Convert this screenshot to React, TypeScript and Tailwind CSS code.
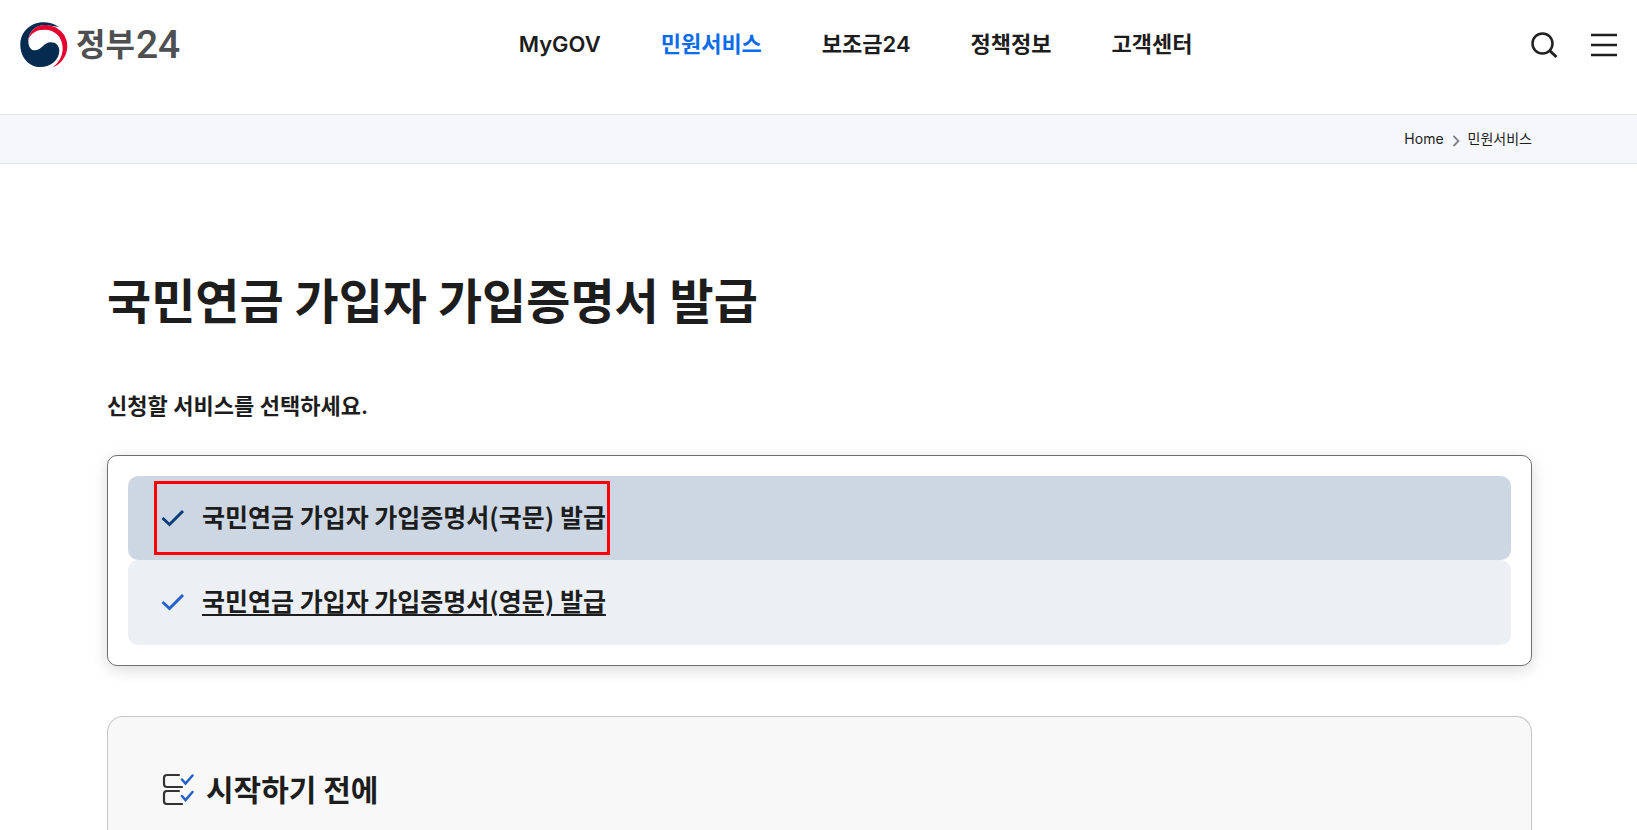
import { ReactNode } from "react";

const navItems = ["MyGOV", "민원서비스", "보조금24", "정책정보", "고객센터"];

type ServiceLinkProps = {
  selected?: boolean;
  children: ReactNode;
};

function Logo() {
  return (
    <a href="#" className="flex h-12 items-center gap-2" aria-label="정부24">
      <svg width="48" height="46" viewBox="59 65 144 138" aria-hidden="true">
        <path
          d="M176 80 C160 69 145 66 130 66 C88 66 60 97 60 133 C60 172 87 200 120 200 C152 200 177 178 177 151 C177 136 166 126 152 126 C130 126 124 150 103 150 C91 150 84 139 84 122 C84 95 106 75 132 75 C150 75 165 79 176 80 Z"
          fill="#052b51"
        />
        <path
          d="M85 115 C89 88 111 74 134 74 C173 74 201 103 201 137 C201 167 182 192 157 201 C176 187 187 167 187 144 C187 110 164 88 132 88 C109 88 93 98 85 115 Z"
          fill="#e4032e"
        />
      </svg>
      <span className="flex items-center gap-px leading-10 text-[#4d4f50]">
        <span className="pb-1.5 text-[32px] font-bold">정부</span>
        <span className="font-['Roboto',sans-serif] text-[39px] font-medium">24</span>
      </span>
    </a>
  );
}

function CheckIcon({ className }: { className: string }) {
  return (
    <svg width="24" height="18" viewBox="0 0 24 18" fill="none" className={className} aria-hidden="true">
      <path d="M1.500 9 L8.500 15.500 L22 2" stroke="currentColor" strokeWidth="3" />
    </svg>
  );
}

function Header() {
  return (
    <header className="flex h-[114px] items-start justify-between px-5 pt-[21px]">
      <Logo />
      <nav className="flex h-12 items-center gap-[60px] pb-0.5 font-['Inter','Noto_Sans_CJK_KR',sans-serif] text-[22px] font-semibold">
        {navItems.map((item) => (
          <a key={item} href="#" className={item === "민원서비스" ? "text-[#0a6cea]" : ""}>
            {item}
          </a>
        ))}
      </nav>
      <div className="flex h-12 items-center gap-8">
        <button type="button" aria-label="검색">
          <svg width="28" height="28" viewBox="0 0 28 28" fill="none" stroke="#222" strokeWidth="2.500">
            <circle cx="11.500" cy="12.500" r="10" />
            <path d="M18.500 19.500 L25.500 26" strokeWidth="3" />
          </svg>
        </button>
        <button type="button" aria-label="전체메뉴">
          <svg width="26" height="24" viewBox="0 0 26 24" fill="none" stroke="currentColor" strokeWidth="2.500">
            <path d="M0 2 H26 M0 12 H26 M0 22 H26" />
          </svg>
        </button>
      </div>
    </header>
  );
}

function Breadcrumb() {
  return (
    <div className="border-y border-[#e1e5ea] bg-[#f5f7fb]">
      <ol className="flex h-12 items-center justify-end gap-2 pr-[105px] font-['Inter','Noto_Sans_CJK_KR',sans-serif] text-sm">
        <li>
          <a href="#">Home</a>
        </li>
        <li className="pt-1" aria-hidden="true">
          <svg width="8" height="12" viewBox="0 0 8 12" fill="none" stroke="#808388" strokeWidth="1.800">
            <path d="M1.500 1 L6.500 6 L1.500 11" />
          </svg>
        </li>
        <li>
          <a href="#">민원서비스</a>
        </li>
      </ol>
    </div>
  );
}

function ServiceLink({ selected, children }: ServiceLinkProps) {
  return (
    <li className={`flex rounded-[10px] px-[26px] pt-[5px] ${selected ? "bg-[#cdd7e4] pb-[5px]" : "bg-[#ecf0f5] pb-1.5"}`}>
      <a
        href="#"
        className={`flex items-center gap-[17px] border-3 pl-1 pr-px text-[25px] leading-[64px] font-semibold ${
          selected ? "border-[#ff0000]" : "border-transparent underline decoration-2 underline-offset-3"
        }`}
      >
        <CheckIcon className={selected ? "text-[#0b3d7c]" : "text-[#2560c9]"} />
        <span className="pb-1">{children}</span>
      </a>
    </li>
  );
}

function GuideCard() {
  return (
    <section className="mt-[50px] grow rounded-t-2xl border border-b-0 border-[#c4c6c8] bg-[#f8f8f8] px-[54px] pt-[49px]">
      <h2 className="flex items-center gap-3 text-[30px] leading-[44px] font-bold">
        <svg width="32" height="32" viewBox="0 0 32 32" fill="none" strokeWidth="2.200" strokeLinecap="round" aria-hidden="true">
          <path
            d="M17 2 H5 Q2 2 2 5 V11 Q2 14 5 14 H20 M17 18 H5 Q2 18 2 21 V28 Q2 31 5 31 H20"
            stroke="#333"
          />
          <path d="M20 6.500 L23.500 10.500 L30.500 2.500 M20 23 L23.500 27 L30.500 19" stroke="#2560c9" strokeWidth="2.500" />
        </svg>
        <span className="pb-0.5">시작하기 전에</span>
      </h2>
    </section>
  );
}

export default function App() {
  return (
    <div className="flex min-h-screen flex-col bg-white font-['Noto_Sans_CJK_KR',sans-serif] text-[#1d1d1d]">
      <Header />
      <Breadcrumb />
      <main className="flex grow flex-col pr-[105px] pl-[107px]">
        <h1 className="mt-[98px] text-5xl leading-[72px] font-bold">국민연금 가입자 가입증명서 발급</h1>
        <p className="mt-[54px] font-['Inter','Noto_Sans_CJK_KR',sans-serif] text-[22px] leading-9 font-semibold">
          신청할 서비스를 선택하세요.
        </p>
        <ul className="mt-[31px] rounded-[10px] border border-[#6d6f70] p-5 shadow-[0_4px_16px_rgba(0,0,0,0.15)]">
          <ServiceLink selected>국민연금 가입자 가입증명서(국문) 발급</ServiceLink>
          <ServiceLink>국민연금 가입자 가입증명서(영문) 발급</ServiceLink>
        </ul>
        <GuideCard />
      </main>
    </div>
  );
}
